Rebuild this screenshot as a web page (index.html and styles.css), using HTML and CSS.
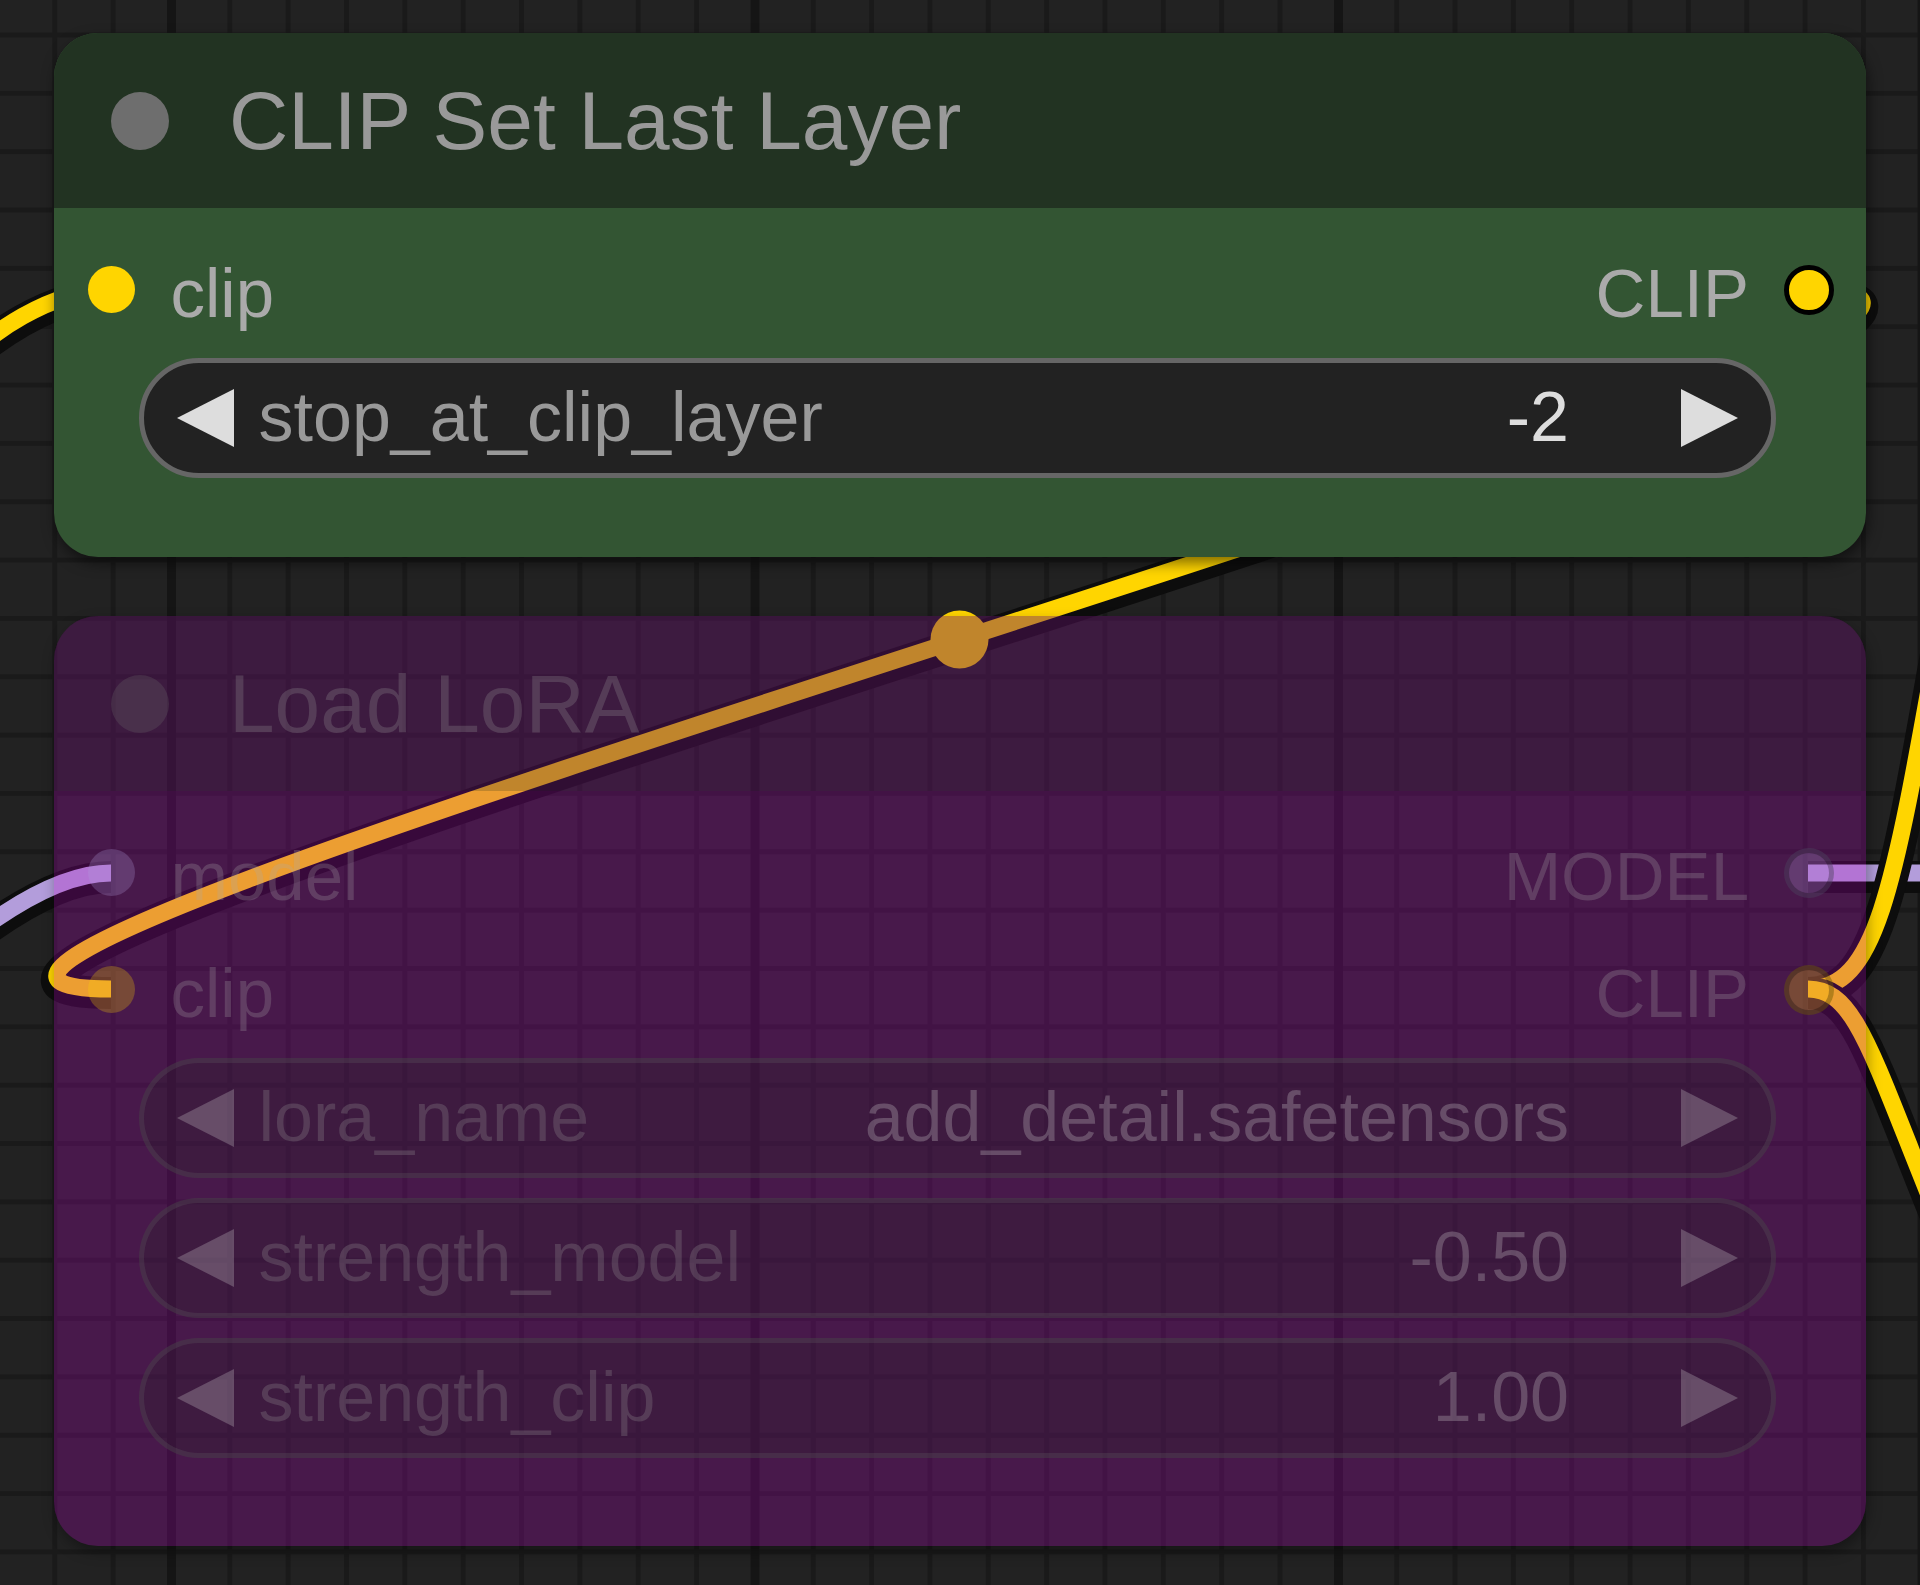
FILE: index.html
```html
<!DOCTYPE html>
<html lang="en">
<head>
  <meta charset="UTF-8" />
  <meta name="viewport" content="width=device-width, initial-scale=1.0"/>
  <title>Graph – CLIP Set Last Layer</title>
  <link rel="stylesheet" href="styles.css">
</head>
<body>
  <div class="graph">

    <!-- links sit under the nodes -->
    <svg class="links" width="1920" height="1585" viewBox="0 0 1920 1585">
      <g>
        <path class="wire-border" d="M -400 1200 C -248 1200 -41 873 111 873"/>
        <path class="wire wire-model" d="M -400 1200 C -248 1200 -41 873 111 873"/>
      </g>
      <g>
        <path class="wire-border" d="M -600 900 C -366 900 -123 290 111 290"/>
        <path class="wire wire-clip" d="M -600 900 C -366 900 -123 290 111 290"/>
      </g>
      <g>
        <path class="wire-border" d="M 1808 290 C 2267 290 -348 989 111 989"/>
        <path class="wire wire-clip" d="M 1808 290 C 2267 290 -348 989 111 989"/>
        <circle class="wire-center" cx="959.5" cy="639.5" r="29"/>
      </g>
      <g>
        <path class="wire-border" d="M 1808 873 L 1940 873"/>
        <path class="wire wire-model" d="M 1808 873 L 1940 873"/>
      </g>
      <g>
        <path class="wire-border" d="M 1808 989 C 1880 989 1895 880 1945 600"/>
        <path class="wire wire-clip" d="M 1808 989 C 1880 989 1895 880 1945 600"/>
      </g>
      <g>
        <path class="wire-border" d="M 1808 989 C 1855 989 1870 1050 1935 1210"/>
        <path class="wire wire-clip" d="M 1808 989 C 1855 989 1870 1050 1935 1210"/>
      </g>
    </svg>

    <!-- CLIP Set Last Layer -->
    <div class="node node-clip-last">
      <div class="node-title">
        <span class="title-dot"></span>
        <span class="title-text">CLIP Set Last Layer</span>
      </div>
      <div class="node-body">
        <div class="slot-row">
          <div class="slot slot-in"><span class="dot dot-clip"></span><span class="slot-label">clip</span></div>
          <div class="slot slot-out"><span class="slot-label">CLIP</span><span class="dot dot-clip"></span></div>
        </div>
        <div class="widget">
          <svg class="arrow" viewBox="0 0 57 58"><path d="M0 29 L57 0 L57 58 Z"/></svg>
          <span class="w-label">stop_at_clip_layer</span>
          <span class="w-value">-2</span>
          <svg class="arrow" viewBox="0 0 57 58"><path d="M57 29 L0 0 L0 58 Z"/></svg>
        </div>
      </div>
    </div>

    <!-- Load LoRA (bypassed) -->
    <div class="node node-bypass node-lora">
      <div class="node-title">
        <span class="title-dot"></span>
        <span class="title-text">Load LoRA</span>
      </div>
      <div class="node-body">
        <div class="slot-row">
          <div class="slot slot-in"><span class="dot dot-model"></span><span class="slot-label">model</span></div>
          <div class="slot slot-out"><span class="slot-label">MODEL</span><span class="dot dot-model"></span></div>
        </div>
        <div class="slot-row">
          <div class="slot slot-in"><span class="dot dot-clip"></span><span class="slot-label">clip</span></div>
          <div class="slot slot-out"><span class="slot-label">CLIP</span><span class="dot dot-clip"></span></div>
        </div>
        <div class="widget">
          <svg class="arrow" viewBox="0 0 57 58"><path d="M0 29 L57 0 L57 58 Z"/></svg>
          <span class="w-label">lora_name</span>
          <span class="w-value">add_detail.safetensors</span>
          <svg class="arrow" viewBox="0 0 57 58"><path d="M57 29 L0 0 L0 58 Z"/></svg>
        </div>
        <div class="widget">
          <svg class="arrow" viewBox="0 0 57 58"><path d="M0 29 L57 0 L57 58 Z"/></svg>
          <span class="w-label">strength_model</span>
          <span class="w-value">-0.50</span>
          <svg class="arrow" viewBox="0 0 57 58"><path d="M57 29 L0 0 L0 58 Z"/></svg>
        </div>
        <div class="widget">
          <svg class="arrow" viewBox="0 0 57 58"><path d="M0 29 L57 0 L57 58 Z"/></svg>
          <span class="w-label">strength_clip</span>
          <span class="w-value">1.00</span>
          <svg class="arrow" viewBox="0 0 57 58"><path d="M57 29 L0 0 L0 58 Z"/></svg>
        </div>
      </div>
    </div>

  </div>
</body>
</html>
```

FILE: styles.css
```css
* {
  box-sizing: border-box;
}

body {
  margin: 0;
  background: #222;
  font-family: 'Liberation Sans', Arial, sans-serif;
}

/* canvas with the zoomed grid */
.graph {
  position: relative;
  width: 1920px;
  height: 1585px;
  overflow: hidden;
  background-color: #222;
  background-image:
    linear-gradient(90deg, #151515 0 9px, transparent 9px),
    linear-gradient(90deg, #1a1a1a 0 5px, transparent 5px),
    linear-gradient(#1a1a1a 0 5px, transparent 5px);
  background-size: 583.5px 100%, 58.35px 100%, 100% 58.35px;
  background-position: 167px 0, 52.3px 0, 0 32.5px;
}

.links {
  position: absolute;
  left: 0;
  top: 0;
}

.wire,
.wire-border {
  fill: none;
  stroke-linecap: butt;
}

.wire-border {
  stroke: #0d0d0d;
  stroke-width: 32;
  transform: translateY(4px);
}

.wire {
  stroke-width: 17;
}

.wire-clip {
  stroke: #ffd500;
}

.wire-model {
  stroke: #b39ddb;
}

.wire-center {
  fill: #ffd500;
}

/* nodes */
.node {
  position: absolute;
  left: 54px;
  width: 1812px;
  border-radius: 44px;
  display: flex;
  flex-direction: column;
}

.node-clip-last {
  top: 33px;
  height: 524px;
  background: #335533;
  box-shadow: 2px 6px 14px rgba(0,0,0,0.5);
}

.node-lora {
  top: 616px;
  height: 930px;
  background: rgba(180,0,195,0.26);
  box-shadow: 2px 6px 14px rgba(0,0,0,0.35);
}

.node-title {
  flex: none;
  height: 175px;
  display: flex;
  align-items: center;
  padding-left: 57px;
  border-radius: 44px 44px 0 0;
  background: #223322;
}

.title-dot {
  width: 58px;
  height: 58px;
  border-radius: 50%;
  margin-right: 60px;
  background: #6e6e6e;
}

.title-text {
  font-size: 82px;
  line-height: 1;
  color: #999;
  white-space: nowrap;
}

.node-body {
  flex: 1;
  padding-top: 23px;
}

.slot-row {
  height: 117px;
  display: flex;
  align-items: center;
  justify-content: space-between;
}

.slot {
  display: flex;
  align-items: center;
}

.slot-in {
  padding-left: 33.5px;
}

.slot-out {
  padding-right: 32.5px;
}

.slot-label {
  font-size: 69px;
  line-height: 1;
  padding-top: 8px;
  color: #aaa;
}

.dot {
  width: 47px;
  height: 47px;
  border-radius: 50%;
}

.slot-in .dot {
  margin-right: 36px;
}

.slot-out .dot {
  width: 50px;
  height: 50px;
  margin-left: 34.5px;
  border: 5px solid #000;
}

.dot-clip {
  background: #ffd500;
}

.dot-model {
  background: #b39ddb;
}

/* combo / number widgets */
.widget {
  height: 120px;
  margin: 10px 90px 0 85px;
  padding: 0 33px;
  border: 5px solid #666;
  border-radius: 60px;
  background: #222;
  display: flex;
  align-items: center;
}

.widget + .widget {
  margin-top: 20px;
}

.arrow {
  flex: none;
  width: 57px;
  height: 58px;
  fill: #ddd;
}

.w-label,
.w-value {
  font-size: 70px;
  line-height: 1;
  padding-bottom: 2px;
  white-space: nowrap;
}

.w-label {
  flex: 1;
  margin-left: 24.5px;
  color: #999;
}

.w-value {
  margin-right: 112px;
  color: #ddd;
}

/* bypassed node: every part drawn faded */
.node-bypass .node-title {
  background: rgba(20,36,20,0.2);
}

.node-bypass .title-dot {
  background: rgba(110,110,110,0.26);
}

.node-bypass .title-text,
.node-bypass .w-label {
  color: rgba(153,153,153,0.26);
}

.node-bypass .slot-label {
  color: rgba(170,170,170,0.26);
}

.node-bypass .w-value {
  color: rgba(221,221,221,0.26);
}

.node-bypass .dot-clip {
  background: rgba(255,213,0,0.26);
}

.node-bypass .dot-model {
  background: rgba(179,157,219,0.26);
}

.node-bypass .slot-out .dot {
  border-color: rgba(0,0,0,0.26);
}

.node-bypass .widget {
  background: rgba(34,34,34,0.26);
  border-color: rgba(102,102,102,0.26);
}

.node-bypass .arrow {
  fill: rgba(221,221,221,0.26);
}
```
